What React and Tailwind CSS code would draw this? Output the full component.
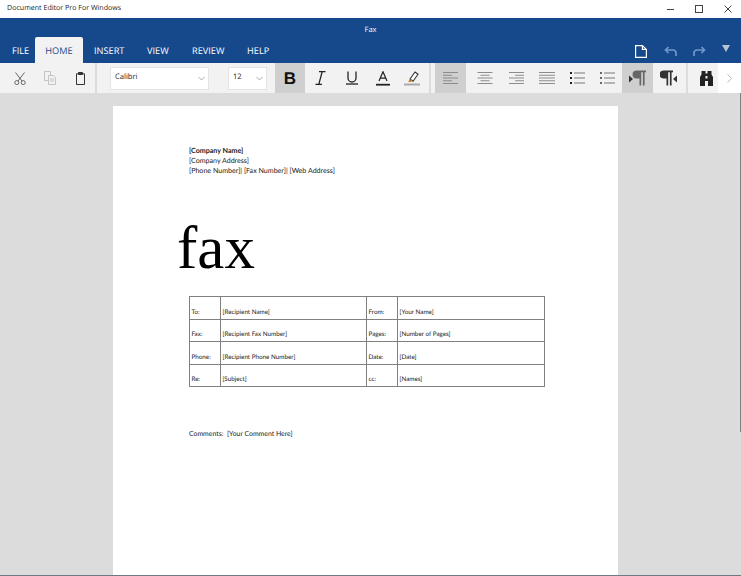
import React from "react";

const Btn = ({ active, className = "w-[31px]", children }) => (
  <div className={`h-full flex items-center justify-center shrink-0 ${active ? "bg-[#cfcfcf]" : ""} ${className}`}>{children}</div>
);
const Sep = ({ className = "" }) => <div className={`w-[2px] h-full bg-[#dcdcdc] shrink-0 ${className}`} />;

const Lines = ({ rows }) => (
  <svg width="16" height="14" viewBox="0 0 16 14" fill="none" stroke="#8c8c8c" strokeWidth="1">
    {rows.map((r, i) => <path key={i} d={`M${r[0]} ${1.5 + i * 2.75}H${r[1]}`} />)}
  </svg>
);
const ListIcon = ({ dark }) => (
  <svg width="15" height="12" viewBox="0 0 15 12" fill="none">
    {[1, 6, 11].map((y) => (
      <g key={y}>
        <rect x="0" y={y - 1} width="2" height="2" fill={dark ? "#222" : "#666"} />
        <path d={`M4 ${y}H15`} stroke="#777" strokeWidth="1" />
      </g>
    ))}
  </svg>
);
const Chevron = ({ c = "#aaa" }) => (
  <svg width="7" height="5" viewBox="0 0 7 5" fill="none" stroke={c} strokeWidth="1"><path d="M0.5 1l3 3 3-3" /></svg>
);
const Para = ({ rtl }) => (
  <svg width="17" height="16" viewBox="0 0 17 16">
    {rtl ? (
      <g fill="#333">
        <path d="M3.6.5H13v1.7h-1.4V15.5H9.9V2.2H8.2v13.3H6.5V8.6H3.6a4 4 0 0 1 0-8.1z" />
        <path d="M17 5.5v7l-4-3.5z" />
      </g>
    ) : (
      <g>
        <path d="M7.6.5H17v1.7h-1.4V15.5h-1.7V2.2h-1.7v13.3h-1.7V8.6H7.6a4 4 0 0 1 0-8.1z" fill="#666" />
        <path d="M0 5.5v7l4-3.5z" fill="#333" />
      </g>
    )}
  </svg>
);

const rows = [
  ["To:", "[Recipient Name]", "From:", "[Your Name]"],
  ["Fax:", "[Recipient Fax Number]", "Pages:", "[Number of Pages]"],
  ["Phone:", "[Recipient Phone Number]", "Date:", "[Date]"],
  ["Re:", "[Subject]", "cc:", "[Names]"],
];

export default function App() {
  return (
    <div className="w-[741px] h-[576px] overflow-hidden flex flex-col bg-white font-['Open_Sans',sans-serif] antialiased [text-rendering:geometricPrecision] opacity-[0.995]">
      {/* title bar */}
      <div className="h-[18px] shrink-0 flex items-center bg-white relative">
        <span className="ml-[7px] text-[7.1px] text-[#222] leading-none">Document Editor Pro For Windows</span>
        <div className="ml-auto flex items-center h-full text-[#333]">
          <svg className="mr-[21px]" width="8" height="8" viewBox="0 0 8 8" stroke="#444" fill="none"><path d="M1 4.5h7" /></svg>
          <svg className="mr-[21px]" width="8" height="8" viewBox="0 0 8 8" stroke="#444" fill="none"><rect x="0.5" y="0.5" width="7" height="7" /></svg>
          <svg className="mr-[9px]" width="8" height="8" viewBox="0 0 8 8" stroke="#444" fill="none"><path d="M.5.5l7 7M7.5.5l-7 7" /></svg>
        </div>
      </div>

      {/* ribbon header */}
      <div className="h-[45px] shrink-0 bg-[#15498b] flex flex-col">
        <div className="h-[24px] shrink-0 flex items-start pt-[8px] justify-center text-[7.5px] leading-[8px] text-white">Fax</div>
        <div className="h-[21px] relative">
          <div className="absolute inset-x-0 bottom-0 h-[26px] flex items-end">
            <div className="flex items-end h-[26px] text-[9.2px] text-white">
              <div className="w-[35px] pl-[12px] h-full flex items-center pt-[1px]">FILE</div>
              <div className="w-[48px] h-full flex items-center justify-center pt-[1px] bg-[#f2f2f2] text-[#15498b] rounded-t-[2px]">HOME</div>
              <div className="ml-[11px] w-[29px] h-full flex items-center pt-[1px]">INSERT</div>
              <div className="ml-[24px] w-[22px] h-full flex items-center pt-[1px]">VIEW</div>
              <div className="ml-[23px] w-[32px] h-full flex items-center pt-[1px]">REVIEW</div>
              <div className="ml-[23px] h-full flex items-center pt-[1px]">HELP</div>
            </div>
            <div className="ml-auto flex items-center h-[26px] pt-[2px]">
              <svg className="mr-[17px]" width="12" height="13" viewBox="0 0 12 13" fill="none" stroke="#fff" strokeWidth="1.2"><path d="M.6.6H7.4L11.4 4.4V12.4H.6zM7.4.6V4.4H11.4" /></svg>
              <svg className="mr-[16px]" width="13" height="11" viewBox="0 0 13 11" fill="none" stroke="#6f98cb" strokeWidth="1.7"><path d="M4.5 1L1.5 4l3 3M1.5 4H9a3 3 0 0 1 3 3v3" /></svg>
              <svg className="mr-[16px]" width="13" height="11" viewBox="0 0 13 11" fill="none" stroke="#6f98cb" strokeWidth="1.7"><path d="M8.5 1l3 3-3 3M11.5 4H4a3 3 0 0 0-3 3v3" /></svg>
              <svg className="mr-[11px] mb-[5px]" width="8" height="7" viewBox="0 0 8 7" fill="#b8c4d6"><path d="M0 0h8L4 7z" /></svg>
            </div>
          </div>
        </div>
      </div>

      {/* toolbar */}
      <div className="h-[30px] shrink-0 bg-[#f2f2f2] flex items-center">
        <div className="w-[95px] h-full flex shrink-0 items-center">
          <div className="w-[35px] flex justify-center pl-[5px]">
            <svg width="12" height="13" viewBox="0 0 12 13" fill="none" stroke="#666" strokeWidth="1"><path d="M1.5 0.5l6.5 8.5M10.5 0.5L4 9" /><circle cx="2.8" cy="10.6" r="2" /><circle cx="9.2" cy="10.6" r="2" /></svg>
          </div>
          <div className="w-[30px] flex justify-center">
            <svg width="12" height="14" viewBox="0 0 12 14" fill="#f2f2f2" stroke="#c4c4c4" strokeWidth="1"><path d="M.5.5h6v9h-6z" /><path d="M4.5 4.5h5l2 2v7h-7z" /><path d="M6 8h4M6 10h4" /></svg>
          </div>
          <div className="w-[30px] flex justify-center">
            <svg width="9" height="13" viewBox="0 0 9 13" fill="none" stroke="#333" strokeWidth="1"><path d="M.5 1.8h8v10.7h-8z" /><path d="M2.5 2.5V.5h4v2z" fill="#333" /></svg>
          </div>
        </div>
        <Sep />
        <div className="ml-[13px] w-[99px] h-[23px] bg-white border border-[#e4e4e4] flex items-center justify-between pl-[4px] pr-[3px] text-[7.6px] text-[#222] shrink-0">
          <span>Calibri</span><Chevron />
        </div>
        <div className="ml-[19px] w-[39px] h-[23px] bg-white border border-[#e4e4e4] flex items-center justify-between pl-[4px] pr-[3px] text-[7.6px] text-[#222] shrink-0">
          <span>12</span><Chevron />
        </div>
        <div className="ml-[8px] h-full flex shrink-0">
          <Btn active className="w-[30px]"><span className="font-['Liberation_Sans',sans-serif] font-bold text-[17px] text-[#111] leading-none">B</span></Btn>
          <Btn>
            <svg width="11" height="14" viewBox="0 0 11 14" stroke="#222" fill="none" strokeWidth="1.3"><path d="M4 .7h6.5M.5 13.3H7M7.2.7L3.8 13.3" /></svg>
          </Btn>
          <Btn>
            <svg width="12" height="14" viewBox="0 0 12 14" stroke="#222" fill="none" strokeWidth="1.3"><path d="M2 .5v6.5a4 4 0 0 0 8 0V.5" /><path d="M0 13h12" /></svg>
          </Btn>
          <Btn>
            <svg width="14" height="15" viewBox="0 0 14 15" stroke="#222" fill="none" strokeWidth="1.2"><path d="M3 10L7 .7 11 10M4.2 7.2h5.6" /><path d="M0 13.7h14" strokeWidth="1.8" /></svg>
          </Btn>
          <Btn className="w-[31px] pr-[3px]">
            <svg width="16" height="15" viewBox="0 0 16 15" fill="none"><path d="M6 8l5-7 3 2.2-5 7z" stroke="#333" strokeWidth="1.1" fill="#fff" /><path d="M6 8.2l-2 2.6 2.6.2 2-1.2z" fill="#c97a1e" /><path d="M0 13.5h16" stroke="#aaa" strokeWidth="2" /></svg>
          </Btn>
        </div>
        <Sep />
        <div className="ml-[4px] h-full flex shrink-0">
          <Btn active><Lines rows={[[0, 15], [0, 9], [0, 15], [0, 9], [0, 15]]} /></Btn>
          <Btn className="w-[31px] ml-[3px]"><Lines rows={[[0.5, 15.5], [3.5, 12.5], [0.5, 15.5], [3.5, 12.5], [0.5, 15.5]]} /></Btn>
          <Btn><Lines rows={[[1, 16], [7, 16], [1, 16], [7, 16], [1, 16]]} /></Btn>
          <Btn><Lines rows={[[0, 16], [0, 16], [0, 16], [0, 16], [0, 16]]} /></Btn>
          <Btn className="w-[30px]"><ListIcon dark /></Btn>
          <Btn className="w-[30px]"><ListIcon /></Btn>
          <Btn active className="w-[31px]"><Para /></Btn>
          <Btn><Para rtl /></Btn>
        </div>
        <Sep className="ml-[2px]" />
        <div className="ml-[12px] shrink-0 flex items-center">
          <svg width="13" height="15" viewBox="0 0 13 15" fill="#222"><path d="M1.5 0H5.5V2.5H7.5V0H11.5V3.5L13 6V15H8V10H5V15H0V6L1.5 3.5z" /><path d="M5.5 5H7.5V7.5H5.5z" fill="#f2f2f2" /></svg>
        </div>
        <div className="ml-[5px] flex-1 h-full bg-white flex items-center justify-center">
          <svg width="5" height="9" viewBox="0 0 5 9" fill="none" stroke="#bbb"><path d="M.5.5l4 4-4 4" /></svg>
        </div>
      </div>

      {/* document area */}
      <div className="flex-1 min-h-0 bg-[#dcdcdc] border-b border-[#707880] relative pl-[113px] pt-[13px] overflow-hidden">
        <div className="absolute right-0 top-0 w-[1px] h-[339px] bg-[#808080]" />
        <div className="w-[505px] h-[600px] bg-white pl-[76px] pt-[40px] font-['Lato',sans-serif] text-[#222]">
          <div className="text-[7.1px] leading-[10px]">
            <div className="font-bold">[Company Name]</div>
            <div>[Company Address]</div>
            <div>[Phone Number]| [Fax Number]| [Web Address]</div>
          </div>
          <div className="ml-[-12px] mt-[35px] h-[75px] font-['Liberation_Serif',serif] text-[#000] text-[61px] leading-[75px]">fax</div>
          <table className="mt-[10px] w-[355px] table-fixed border-collapse text-[6.3px]">
            <colgroup>
              <col className="w-[31px]" />
              <col className="w-[146px]" />
              <col className="w-[31px]" />
              <col className="w-[147px]" />
            </colgroup>
            <tbody>
              {rows.map((r) => (
                <tr key={r[0]} className="h-[22.5px]">
                  {r.map((c) => (
                    <td key={c} className="border border-[#808080] px-[1.5px] pb-[1px] align-bottom leading-[10px] whitespace-nowrap overflow-hidden">{c}</td>
                  ))}
                </tr>
              ))}
            </tbody>
          </table>
          <div className="mt-[42px] text-[6.9px] leading-[10px] whitespace-pre">Comments:  [Your Comment Here]</div>
        </div>
      </div>
    </div>
  );
}
